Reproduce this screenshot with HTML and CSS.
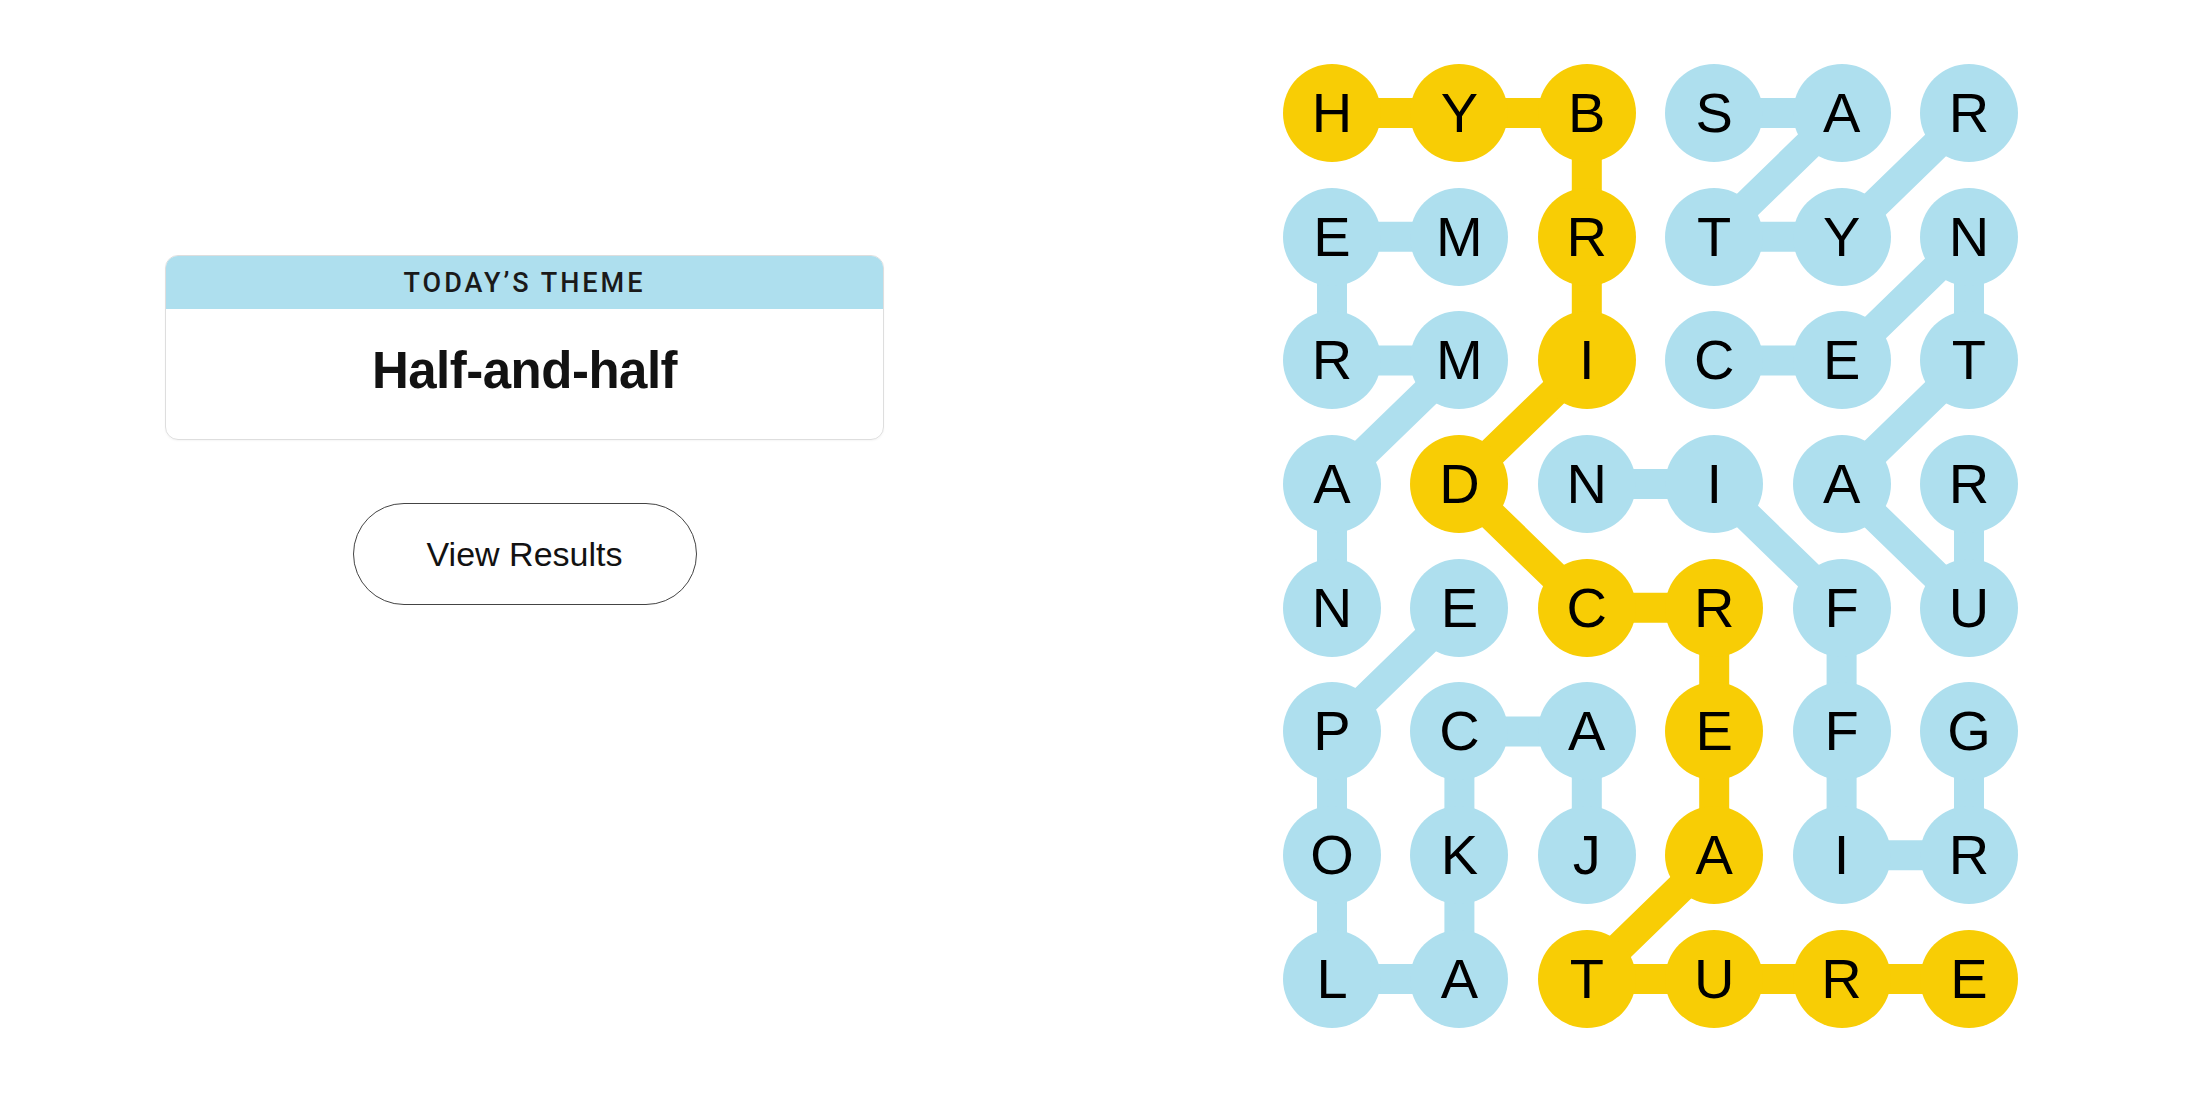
FILE: index.html
```html
<!DOCTYPE html>
<html lang="en">
<head>
<meta charset="utf-8">
<title>Strands</title>
<link rel="stylesheet" href="styles.css">
</head>
<body>
<main class="page">
  <section class="side">
    <div class="theme-card">
      <div class="theme-head">TODAY’S THEME</div>
      <div class="theme-body"><h1 class="theme-title">Half-and-half</h1></div>
    </div>
    <button class="results-btn">View Results</button>
  </section>
  <section class="board">
    <svg class="links" width="735" height="964" viewBox="0 0 735 964" aria-hidden="true">
      <g fill="none" stroke-width="30" stroke-linejoin="round">
        <polyline class="link-blue" points="431.2,49 558.6,49 431.2,172.7 558.6,172.7 686,49"/>
        <polyline class="link-blue" points="431.2,296.4 558.6,296.4 686,172.7 686,296.4 558.6,420.1 686,543.8 686,420.1"/>
        <polyline class="link-blue" points="176.4,172.7 49,172.7 49,296.4 176.4,296.4 49,420.1 49,543.8"/>
        <polyline class="link-blue" points="686,667.5 686,791.2 558.6,791.2 558.6,667.5 558.6,543.8 431.2,420.1 303.8,420.1"/>
        <polyline class="link-blue" points="303.8,791.2 303.8,667.5 176.4,667.5 176.4,791.2 176.4,914.9 49,914.9 49,791.2 49,667.5 176.4,543.8"/>
        <polyline class="link-yellow" points="49,49 176.4,49 303.8,49 303.8,172.7 303.8,296.4 176.4,420.1 303.8,543.8 431.2,543.8 431.2,667.5 431.2,791.2 303.8,914.9 431.2,914.9 558.6,914.9 686,914.9"/>
      </g>
    </svg>
    <div class="grid">
      <div class="cell gold">H</div><div class="cell gold">Y</div><div class="cell gold">B</div><div class="cell">S</div><div class="cell">A</div><div class="cell">R</div>
      <div class="cell">E</div><div class="cell">M</div><div class="cell gold">R</div><div class="cell">T</div><div class="cell">Y</div><div class="cell">N</div>
      <div class="cell">R</div><div class="cell">M</div><div class="cell gold">I</div><div class="cell">C</div><div class="cell">E</div><div class="cell">T</div>
      <div class="cell">A</div><div class="cell gold">D</div><div class="cell">N</div><div class="cell">I</div><div class="cell">A</div><div class="cell">R</div>
      <div class="cell">N</div><div class="cell">E</div><div class="cell gold">C</div><div class="cell gold">R</div><div class="cell">F</div><div class="cell">U</div>
      <div class="cell">P</div><div class="cell">C</div><div class="cell">A</div><div class="cell gold">E</div><div class="cell">F</div><div class="cell">G</div>
      <div class="cell">O</div><div class="cell">K</div><div class="cell">J</div><div class="cell gold">A</div><div class="cell">I</div><div class="cell">R</div>
      <div class="cell">L</div><div class="cell">A</div><div class="cell gold">T</div><div class="cell gold">U</div><div class="cell gold">R</div><div class="cell gold">E</div>
    </div>
  </section>
</main>
</body>
</html>
```
FILE: styles.css
```css
html, body {
  margin: 0;
  padding: 0;
  background: #ffffff;
}

body {
  width: 2200px;
  height: 1100px;
  overflow: hidden;
  font-family: "Liberation Sans", Arial, sans-serif;
  color: #121212;
}

.page {
  display: flex;
  align-items: flex-start;
}

.side {
  width: 1049px;
  padding-top: 255px;
  display: flex;
  flex-direction: column;
  align-items: center;
}

.theme-card {
  width: 719px;
  box-sizing: border-box;
  border: 1px solid #dedede;
  border-radius: 13px;
  overflow: hidden;
  box-shadow: 0 1px 2px rgba(0, 0, 0, 0.04);
}

.theme-head {
  height: 53px;
  background: #aedfee;
  display: flex;
  align-items: center;
  justify-content: center;
  font-family: Roboto, "Liberation Sans", Arial, sans-serif;
  font-size: 27px;
  font-weight: 500;
  letter-spacing: 3px;
  color: #1a1a1a;
  padding-top: 1px;
  box-sizing: border-box;
}

.theme-body {
  height: 130px;
  display: flex;
  align-items: center;
  justify-content: center;
  padding-bottom: 8px;
  box-sizing: border-box;
}

.theme-title {
  margin: 0;
  font-size: 51px;
  font-weight: 700;
  color: #121212;
  letter-spacing: -0.5px;
}

.results-btn {
  margin-top: 63px;
  width: 344px;
  height: 102px;
  border: 1.5px solid #444;
  border-radius: 51px;
  background: #fff;
  font-family: "Liberation Sans", Arial, sans-serif;
  font-size: 34px;
  color: #121212;
  padding: 0;
}

.board {
  position: relative;
  margin-left: 234px;
  margin-top: 64px;
  width: 735px;
  height: 964px;
}

.links {
  position: absolute;
  left: 0;
  top: 0;
}

.link-blue {
  stroke: #aedfee;
}

.link-yellow {
  stroke: #f8cd05;
}

.grid {
  position: relative;
  display: grid;
  grid-template-columns: repeat(6, 98px);
  grid-template-rows: repeat(8, 98px);
  column-gap: 29.4px;
  row-gap: 25.7px;
}

.cell {
  width: 98px;
  height: 98px;
  border-radius: 50%;
  background: #aedfee;
  display: flex;
  align-items: center;
  justify-content: center;
  font-size: 56px;
  color: #000;
  line-height: 1;
}

.cell.gold {
  background: #f8cd05;
}
```
